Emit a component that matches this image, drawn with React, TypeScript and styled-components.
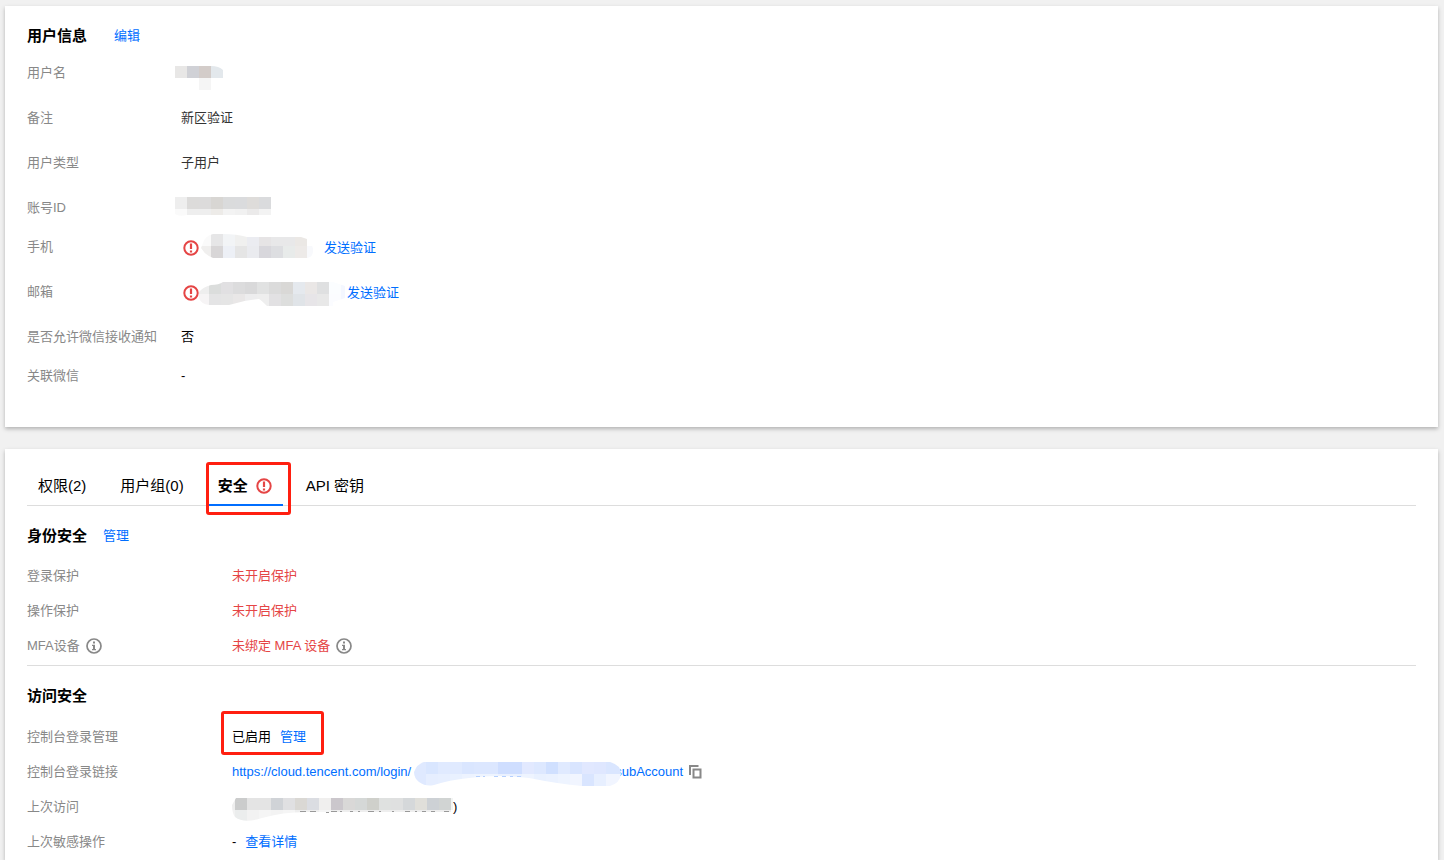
import React from 'react';
import styled, { createGlobalStyle } from 'styled-components';

const BLUE = '#006eff';
const RED = '#e54545';

const GlobalStyle = createGlobalStyle`
  * { box-sizing: border-box; }
  body {
    margin: 0;
    background: #f1f1f1;
    color: #000;
    font: 13px/20px "Liberation Sans", "Noto Sans CJK SC", sans-serif;
  }
`;

const Page = styled.main`
  min-height: 100vh;
  padding: 6px 6px 0 5px;
  display: flex;
  flex-direction: column;
  gap: 22px;
`;

const Card = styled.section<{ $fill?: boolean }>`
  background: #fff;
  box-shadow: 0 2px 4px rgba(0, 0, 0, 0.26);
  padding: ${(p) => (p.$fill ? '14px 22px 0' : '19px 22px 26px')};
  flex: ${(p) => (p.$fill ? '1 0 auto' : 'none')};
`;

const Heading = styled.header<{ $gap: number }>`
  display: flex;
  align-items: center;
  gap: ${(p) => p.$gap}px;
  height: 22px;
`;

const Title = styled.h2`
  margin: 0;
  font-size: 15px;
  line-height: 22px;
  font-weight: 700;
`;

const Link = styled.a`
  color: ${BLUE};
  text-decoration: none;
  white-space: nowrap;
`;

const LinkButton = styled.button`
  padding: 0;
  border: 0;
  background: none;
  color: ${BLUE};
  font: inherit;
  cursor: pointer;
`;

const Section = styled.div`
  padding-top: 19px;
`;

const List = styled.dl<{ $top: number }>`
  margin: 0;
  padding-top: ${(p) => p.$top}px;
`;

const Row = styled.div<{ $height: number; $label: number }>`
  display: grid;
  grid-template-columns: ${(p) => p.$label}px 1fr;
  height: ${(p) => p.$height}px;
`;

const Label = styled.dt`
  display: flex;
  align-items: center;
  gap: 6px;
  height: 20px;
  color: #888;
`;

const Value = styled.dd<{ $tone?: 'danger' | 'soft'; $gap?: number }>`
  display: flex;
  align-items: center;
  gap: ${(p) => p.$gap ?? 6}px;
  height: 20px;
  margin: 0;
  color: ${(p) => (p.$tone === 'danger' ? RED : p.$tone === 'soft' ? '#333' : '#000')};
`;

const ContactValue = styled(Value)`
  padding: 2px 0 0 2px;
`;

const Tabs = styled.nav`
  display: flex;
  height: 43px;
  border-bottom: 1px solid #ddd;
`;

const Tab = styled.button<{ $active?: boolean }>`
  position: relative;
  display: flex;
  align-items: center;
  gap: 8px;
  height: 43px;
  padding: 4px 11px 0;
  margin-right: 12px;
  border: 0;
  border-bottom: 2px solid ${(p) => (p.$active ? BLUE : 'transparent')};
  background: none;
  color: #000;
  font: inherit;
  font-size: 15px;
  font-weight: ${(p) => (p.$active ? 700 : 400)};
  white-space: nowrap;
  cursor: pointer;
`;

const Mark = styled.span<{ $inset: string }>`
  position: absolute;
  inset: ${(p) => p.$inset};
  border: 3px solid #ff1f10;
  border-radius: 3px;
  pointer-events: none;
`;

const Marked = styled.span`
  position: relative;
  display: flex;
  gap: 9px;
`;

const Rule = styled.hr`
  margin: 0 0 19px;
  border: 0;
  border-top: 1px solid #ddd;
`;

const IconButton = styled.button`
  display: flex;
  padding: 0;
  border: 0;
  background: none;
  cursor: pointer;
`;

const MosaicSvg = styled.svg<{ $pull?: string }>`
  flex: none;
  position: relative;
  margin: ${(p) => p.$pull ?? '0'};
`;

const LoginLink = styled(Link)`
  display: flex;
  align-items: center;
`;

const WarnIcon = () => (
  <svg width="16" height="16" viewBox="0 0 16 16" fill="none" aria-hidden="true">
    <circle cx="8" cy="8" r="6.7" stroke={RED} strokeWidth="2" />
    <path d="M8 3.6V9M8 10.4V12.4" stroke={RED} strokeWidth="2.2" />
  </svg>
);

const InfoIcon = () => (
  <svg width="16" height="16" viewBox="0 0 16 16" aria-hidden="true">
    <circle cx="8" cy="8" r="7" fill="none" stroke="#888" strokeWidth="1.7" />
    <path d="M7 3.6H9V5.6H7ZM6 6.7H9V11H10V12.2H6V11H7V7.9H6Z" fill="#888" />
  </svg>
);

const CopyIcon = () => (
  <svg width="13" height="14" viewBox="0 0 13 14" fill="none" aria-hidden="true">
    <path d="M1 10V1H9.5" stroke="#888" strokeWidth="2" />
    <path d="M4.5 4.5H11.5V12.5H4.5Z" stroke="#888" strokeWidth="2" />
  </svg>
);

type MosaicProps = {
  id: string;
  width: number;
  height: number;
  offset?: number;
  rows: string[][];
  outline: string;
  specks?: string;
  speckColor?: string;
  pull?: string;
};

/* Censored value: 12px blocks clipped to the brushed outline, with leftover specks of the text. */
const Mosaic = ({ id, width, height, offset = 0, rows, outline, specks, speckColor, pull }: MosaicProps) => (
  <MosaicSvg width={width} height={height} $pull={pull} aria-hidden="true" shapeRendering="crispEdges">
    <clipPath id={id}>
      <path d={outline} />
    </clipPath>
    <g clipPath={`url(#${id})`}>
      {rows.map((row, y) =>
        row.map((fill, x) => (
          <rect key={`${x}-${y}`} x={x * 12 - offset} y={y * 12} width="12" height="12" fill={fill} />
        )),
      )}
    </g>
    {specks && <path d={specks} stroke={speckColor} />}
  </MosaicSvg>
);

export default function App() {
  return (
    <>
      <GlobalStyle />
      <Page>
        <Card>
          <Heading $gap={27}>
            <Title>用户信息</Title>
            <LinkButton type="button">编辑</LinkButton>
          </Heading>
          <List $top={16}>
            <Row $height={45} $label={154}>
              <Label>用户名</Label>
              <Value>
                <Mosaic id="m-name" width={48} height={24} pull="10px 0 0 -6px"
                  outline="M0 0H36Q44 0 48 4V12H36V24H24V12H0Z"
                  rows={[['#e8e7e6', '#d0d1d6', '#d3ccc9', '#e3e8ec'], ['#fff', '#fff', '#f5f5f5', '#fff']]} />
              </Value>
            </Row>
            <Row $height={45} $label={154}>
              <Label>备注</Label>
              <Value $tone="soft">新区验证</Value>
            </Row>
            <Row $height={45} $label={154}>
              <Label>用户类型</Label>
              <Value $tone="soft">子用户</Value>
            </Row>
            <Row $height={39} $label={154}>
              <Label>账号ID</Label>
              <Value>
                <Mosaic id="m-id" width={96} height={20} pull="0 0 2px -6px"
                  outline="M0 0H96V18H12Q4 20 0 17Z"
                  rows={[
                    ['#eeeeee', '#dcdbda', '#dcdbdb', '#d8d6d3', '#dadbdc', '#dadbdd', '#dedcda', '#dadbdd'],
                    ['#fafafa', '#eeeeee', '#eeeeee', '#edebe8', '#f3f3f3', '#f1f1f1', '#ebeaea', '#f3f3f3'],
                  ]} />
              </Value>
            </Row>
            <Row $height={45} $label={154}>
              <Label>手机</Label>
              <ContactValue $gap={2}>
                <WarnIcon />
                <Mosaic id="m-phone" width={113} height={24} offset={2} pull="0 8px 4px 0"
                  outline="M2 9Q4 2 12 0H22Q36 0 46 3H100L106 5V8Q113 11 112 17Q112 23 106 24H12Q4 21 0 14Z"
                  rows={[
                    ['#fafafa', '#e6e6e7', '#f2f4f6', '#f0f0ef', '#ebecf1', '#e6e4e5', '#e8e8e9', '#e8e8e9', '#ebe8e5', '#fff'],
                    ['#f0efee', '#d8d6d7', '#edf0f6', '#e5e5e5', '#eaebef', '#d8d7dc', '#dddee1', '#e8ebea', '#edeae8', '#f8f9fc'],
                  ]} />
                <LinkButton type="button">发送验证</LinkButton>
              </ContactValue>
            </Row>
            <Row $height={45} $label={154}>
              <Label>邮箱</Label>
              <ContactValue $gap={2}>
                <WarnIcon />
                <Mosaic id="m-mail" width={146} height={24} offset={2} pull="2px 0 0 -2px"
                  outline="M0 10Q4 5 12 3Q20 3 24 0H134L146 4V16L134 20V24H68Q62 18 60 17Q45 18 30 23H10Q2 22 0 16Z"
                  rows={[
                    ['#eeeeee', '#dbdddc', '#e1e0e2', '#dcdcdd', '#d9d9da', '#e1e2e2', '#dbdbdb', '#d9d8d6', '#e5e9ee', '#eae7e6', '#dfe0e1', '#fbfdff', '#f4f7ff'],
                    ['#f6f4f5', '#e4e4e5', '#e5e5e5', '#e9e7e7', '#ededee', '#eeeeee', '#e2e1e3', '#dddedd', '#e0e4e8', '#e7e5e8', '#e8e8e8', '#fbfcff', '#f4f7ff'],
                  ]} />
                <LinkButton type="button">发送验证</LinkButton>
              </ContactValue>
            </Row>
            <Row $height={39} $label={154}>
              <Label>是否允许微信接收通知</Label>
              <Value>否</Value>
            </Row>
            <Row $height={35} $label={154}>
              <Label>关联微信</Label>
              <Value>-</Value>
            </Row>
          </List>
        </Card>

        <Card $fill>
          <Tabs>
            <Tab type="button">权限(2)</Tab>
            <Tab type="button">用户组(0)</Tab>
            <Tab type="button" $active>
              安全
              <WarnIcon />
              <Mark $inset="-1px -8px -11px -1px" />
            </Tab>
            <Tab type="button">API 密钥</Tab>
          </Tabs>
          <Section>
            <Heading $gap={16}>
              <Title>身份安全</Title>
              <LinkButton type="button">管理</LinkButton>
            </Heading>
          </Section>
          <List $top={19}>
            <Row $height={35} $label={205}>
              <Label>登录保护</Label>
              <Value $tone="danger">未开启保护</Value>
            </Row>
            <Row $height={35} $label={205}>
              <Label>操作保护</Label>
              <Value $tone="danger">未开启保护</Value>
            </Row>
            <Row $height={29} $label={205}>
              <Label>MFA设备<InfoIcon /></Label>
              <Value $tone="danger">未绑定 MFA 设备<InfoIcon /></Value>
            </Row>
          </List>
          <Rule />
          <Heading $gap={16}>
            <Title>访问安全</Title>
          </Heading>
          <List $top={20}>
            <Row $height={35} $label={205}>
              <Label>控制台登录管理</Label>
              <Value>
                <Marked>
                  已启用
                  <LinkButton type="button">管理</LinkButton>
                  <Mark $inset="-16px -18px -8px -11px" />
                </Marked>
              </Value>
            </Row>
            <Row $height={35} $label={205}>
              <Label>控制台登录链接</Label>
              <Value>
                <LoginLink href="#login">
                  https://cloud.tencent.com/login/
                  <Mosaic id="m-link" width={207} height={24} pull="4px -6px 0 3px"
                    outline="M10 0H196Q207 3 207 12Q206 21 196 24H168Q145 22 115 16Q85 12 55 16Q35 18 20 23Q12 25 5 20Q0 16 0 10Q3 2 10 0Z"
                    specks="M62 14.5H66M69 14.5H71M80 14.5H84M88 14.5H92M96 14.5H99M103 14.5H107" speckColor="#b5d0ff"
                    rows={[
                      ['#dfe9ff', '#d9e6ff', '#e0eaff', '#e0eaff', '#dae6ff', '#dce7ff', '#dce7ff', '#cfdeff', '#cfdeff', '#e2e9ff', '#dde8ff', '#d0e0ff', '#e0eaff', '#d9e5ff', '#e1e8ff', '#dfe7ff', '#dae6ff', '#dae6ff'],
                      ['#dfe9ff', '#e6eeff', '#e7efff', '#e9f1ff', '#edf3ff', '#eef4ff', '#eef4ff', '#eaf1ff', '#eaf1ff', '#eef4ff', '#e9f1ff', '#ebf2ff', '#eef4ff', '#f1f5ff', '#d9e5ff', '#e7efff', '#f1f5ff', '#f1f5ff'],
                    ]} />
                  subAccount
                </LoginLink>
                <IconButton type="button" aria-label="复制"><CopyIcon /></IconButton>
              </Value>
            </Row>
            <Row $height={35} $label={205}>
              <Label>上次访问</Label>
              <Value $gap={0}>
                <Mosaic id="m-visit" width={221} height={23} offset={9} pull="4px 0 0 0"
                  outline="M0 7L4 0H221V14H75Q50 14 30 20Q12 26 3 19Q0 15 0 7Z"
                  specks="M68 13.5H74M78 13.5H84M94 14.5H97M99 13.5H105M108 13.5H110M118 13.5H121M126 13.5H128M136 13.5H142M147 13.5H149M160 13.5H162M173 13.5H178M183 13.5H185M190 13.5H194M199 13.5H203M212 13.5H217" speckColor="#999"
                  rows={[
                    ['#eeeeee', '#cbcccc', '#e4e4e4', '#e4e4e4', '#d0d3d7', '#e0e0e2', '#dad8d4', '#dbdde2', '#f0efee', '#cbc7cc', '#d9d8d7', '#d5d8d7', '#cfd0cb', '#dfe1e0', '#dfe0e0', '#d5d8da', '#e0dfda', '#cdd1d5', '#d1d4d3', '#f2f4f3'],
                    ['#f2f2f2', '#ebeded', '#f2f2f2', '#f5f5f5', '#f3f3f3', '#f5f5f5', '#eee', '#eee', '#f5f5f5', '#eee', '#eee', '#eee', '#eee', '#eee', '#eee', '#eee', '#eee', '#eee', '#eee', '#fff'],
                  ]} />
                )
              </Value>
            </Row>
            <Row $height={20} $label={205}>
              <Label>上次敏感操作</Label>
              <Value $gap={9}>
                -
                <Link href="#detail">查看详情</Link>
              </Value>
            </Row>
          </List>
        </Card>
      </Page>
    </>
  );
}
